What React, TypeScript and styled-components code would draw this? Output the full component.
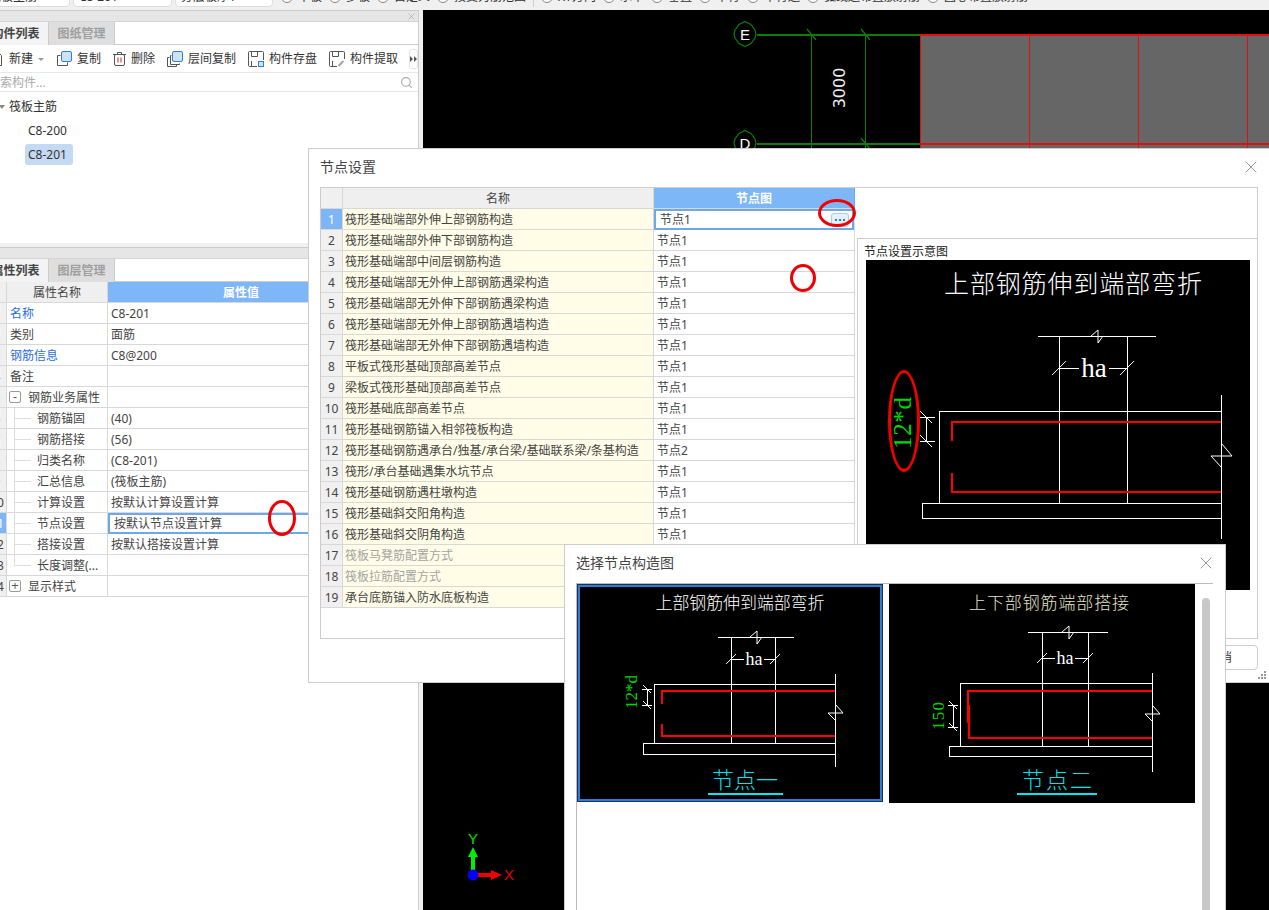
import styled, { createGlobalStyle } from "styled-components";
import { Search, X } from "lucide-react";

const GlobalStyle = createGlobalStyle`
  html, body {
    margin: 0;
    height: 910px;
    overflow: hidden;
    background: #f0f0f0;
    color: #333;
    font: 12px/20px "Noto Sans", "Noto Sans CJK SC", sans-serif;
  }
  * { box-sizing: border-box; }
`;

/* ---------- data ---------- */

const RADIOS = ["中板", "多板", "自定义", "按受力筋范围", "|", "XY方向", "水平", "垂直", "平行", "平行边", "弧线边布置放射筋", "圆心布置放射筋"];

const PROPS = [
  { no: 1, name: "名称", value: "C8-201", link: true },
  { no: 2, name: "类别", value: "面筋" },
  { no: 3, name: "钢筋信息", value: "C8@200", link: true },
  { no: 4, name: "备注", value: "" },
  { no: 5, name: "钢筋业务属性", value: "", group: "-" },
  { no: 6, name: "钢筋锚固", value: "(40)", child: true },
  { no: 7, name: "钢筋搭接", value: "(56)", child: true },
  { no: 8, name: "归类名称", value: "(C8-201)", child: true },
  { no: 9, name: "汇总信息", value: "(筏板主筋)", child: true },
  { no: 10, name: "计算设置", value: "按默认计算设置计算", child: true },
  { no: 11, name: "节点设置", value: "按默认节点设置计算", child: true, active: true },
  { no: 12, name: "搭接设置", value: "按默认搭接设置计算", child: true },
  { no: 13, name: "长度调整(...", value: "", child: true, last: true },
  { no: 14, name: "显示样式", value: "", group: "+" },
];

const NODES = [
  { name: "筏形基础端部外伸上部钢筋构造", node: "节点1" },
  { name: "筏形基础端部外伸下部钢筋构造", node: "节点1" },
  { name: "筏形基础端部中间层钢筋构造", node: "节点1" },
  { name: "筏形基础端部无外伸上部钢筋遇梁构造", node: "节点1" },
  { name: "筏形基础端部无外伸下部钢筋遇梁构造", node: "节点1" },
  { name: "筏形基础端部无外伸上部钢筋遇墙构造", node: "节点1" },
  { name: "筏形基础端部无外伸下部钢筋遇墙构造", node: "节点1" },
  { name: "平板式筏形基础顶部高差节点", node: "节点1" },
  { name: "梁板式筏形基础顶部高差节点", node: "节点1" },
  { name: "筏形基础底部高差节点", node: "节点1" },
  { name: "筏形基础钢筋锚入相邻筏板构造", node: "节点1" },
  { name: "筏形基础钢筋遇承台/独基/承台梁/基础联系梁/条基构造", node: "节点2" },
  { name: "筏形/承台基础遇集水坑节点", node: "节点1" },
  { name: "筏形基础钢筋遇柱墩构造", node: "节点1" },
  { name: "筏形基础斜交阳角构造", node: "节点1" },
  { name: "筏形基础斜交阴角构造", node: "节点1" },
  { name: "筏板马凳筋配置方式", node: "", muted: true },
  { name: "筏板拉筋配置方式", node: "", muted: true },
  { name: "承台底筋锚入防水底板构造", node: "" },
];

type DiagramSpec = {
  view: [number, number, number, number];
  title: { text: string; x: number; y: number; size: number; width: number; color: string };
  dim: { x1: number; x2: number; y: number };
  cols: [number, number];
  ha: { x: number; y: number; size: number };
  slab: { left: number; top: number; bottom: number };
  right: { x: number; y1: number; y2: number };
  base: { left: number; bottom: number };
  rebar: { top: number; bottom: number; upper: [number, number]; lower: [number, number]; stubTop: number; stubBottom: number };
  side: { x1: number; x2: number; xm: number; y1: number; y2: number };
  sideLabel: { text: string; x: number; y: number; size: number; width: number };
  breakAt: { x: number; y: number; h: number; w: number };
  caption?: { text: string; x: number; y: number; size: number; width: number; x1: number; x2: number; lineY: number };
};

const PREVIEW: DiagramSpec = {
  view: [866, 260, 384, 330],
  title: { text: "上部钢筋伸到端部弯折", x: 1073, y: 293, size: 25, width: 258, color: "#fff" },
  dim: { x1: 1038, x2: 1156, y: 336 },
  cols: [1059, 1127],
  ha: { x: 1094, y: 377, size: 27 },
  slab: { left: 939, top: 411, bottom: 503 },
  right: { x: 1221, y1: 395, y2: 539 },
  base: { left: 922, bottom: 518 },
  rebar: { top: 422, bottom: 492, upper: [952, 952], lower: [952, 952], stubTop: 441, stubBottom: 473 },
  side: { x1: 920, x2: 935, xm: 926, y1: 417, y2: 441 },
  sideLabel: { text: "12*d", x: 911, y: 423, size: 25, width: 52 },
  breakAt: { x: 1221, y: 456, h: 12, w: 10 },
};

const NODE_ONE: DiagramSpec = {
  view: [577, 584, 306, 218],
  title: { text: "上部钢筋伸到端部弯折", x: 740, y: 609, size: 17, width: 169, color: "#fff" },
  dim: { x1: 718, x2: 794, y: 637 },
  cols: [731, 775],
  ha: { x: 754, y: 665, size: 18 },
  slab: { left: 654, top: 684, bottom: 743 },
  right: { x: 835, y1: 674, y2: 767 },
  base: { left: 643, bottom: 754 },
  rebar: { top: 691, bottom: 736, upper: [662, 662], lower: [662, 662], stubTop: 704, stubBottom: 724 },
  side: { x1: 642, x2: 652, xm: 647, y1: 689, y2: 705 },
  sideLabel: { text: "12*d", x: 637, y: 692, size: 17, width: 34 },
  breakAt: { x: 835, y: 713, h: 8, w: 7 },
  caption: { text: "节点一", x: 745, y: 788, size: 22, width: 66, x1: 708, x2: 783, lineY: 793 },
};

const NODE_TWO: DiagramSpec = {
  view: [889, 584, 306, 219],
  title: { text: "上下部钢筋端部搭接", x: 1049, y: 609, size: 17, width: 160, color: "#e6e0cc" },
  dim: { x1: 1028, x2: 1108, y: 632 },
  cols: [1042, 1088],
  ha: { x: 1065, y: 664, size: 18 },
  slab: { left: 960, top: 683, bottom: 746 },
  right: { x: 1152, y1: 673, y2: 772 },
  base: { left: 949, bottom: 756 },
  rebar: { top: 691, bottom: 738, upper: [968, 723], lower: [969, 705], stubTop: 723, stubBottom: 705 },
  side: { x1: 948, x2: 958, xm: 953, y1: 705, y2: 727 },
  sideLabel: { text: "150", x: 944, y: 716, size: 17, width: 28 },
  breakAt: { x: 1152, y: 714, h: 8, w: 7 },
  caption: { text: "节点二", x: 1057, y: 788, size: 22, width: 70, x1: 1017, x2: 1097, lineY: 793 },
};

/* ---------- drawings ---------- */

function Tick({ x, y, r }: { x: number; y: number; r: number }) {
  return <line x1={x - r} y1={y + r} x2={x + r} y2={y - r} />;
}

function NodeDiagram({ spec }: { spec: DiagramSpec }) {
  const { view, title, dim, cols, ha, slab, right, base, rebar, side, sideLabel, breakAt, caption } = spec;
  const tickR = view[2] > 320 ? 6 : 4;
  const haGap = ha.size * 0.55;
  return (
    <svg width={view[2]} height={view[3]} viewBox={view.join(" ")} style={{ display: "block" }}>
      <rect x={view[0]} y={view[1]} width={view[2]} height={view[3]} fill="#000" />
      <DiagramTitle x={title.x} y={title.y} fontSize={title.size} fill={title.color} textLength={title.width}>
        {title.text}
      </DiagramTitle>
      <g stroke="#fff" strokeWidth="1" fill="none">
        <g shapeRendering="crispEdges">
          <line x1={dim.x1} y1={dim.y + 0.5} x2={dim.x2} y2={dim.y + 0.5} />
          <line x1={cols[0] + 0.5} y1={dim.y} x2={cols[0] + 0.5} y2={slab.bottom} />
          <line x1={cols[1] + 0.5} y1={dim.y} x2={cols[1] + 0.5} y2={slab.bottom} />
          <line x1={cols[0]} y1={ha.y - ha.size * 0.33} x2={ha.x - haGap} y2={ha.y - ha.size * 0.33} />
          <line x1={ha.x + haGap} y1={ha.y - ha.size * 0.33} x2={cols[1]} y2={ha.y - ha.size * 0.33} />
          <path d={`M${slab.left + 0.5} ${slab.bottom}V${slab.top + 0.5}H${right.x}`} />
          <line x1={right.x + 0.5} y1={right.y1} x2={right.x + 0.5} y2={right.y2} />
          <rect x={base.left + 0.5} y={slab.bottom + 0.5} width={right.x - base.left} height={base.bottom - slab.bottom} />
          <line x1={side.x1} y1={side.y1 + 0.5} x2={side.x2} y2={side.y1 + 0.5} />
          <line x1={side.x1} y1={side.y2 + 0.5} x2={side.x2} y2={side.y2 + 0.5} />
          <line x1={side.xm + 0.5} y1={side.y1} x2={side.xm + 0.5} y2={side.y2} />
        </g>
        <Tick x={cols[0]} y={ha.y - ha.size * 0.33} r={tickR + 1} />
        <Tick x={cols[1]} y={ha.y - ha.size * 0.33} r={tickR + 1} />
        <path d={`M${side.xm - tickR} ${side.y1 - tickR}L${side.xm + tickR} ${side.y1 + tickR}M${side.xm - tickR} ${side.y2 - tickR}L${side.xm + tickR} ${side.y2 + tickR}`} />
        <path d={`M${(dim.x1 + dim.x2) / 2 - 6} ${dim.y}L${(dim.x1 + dim.x2) / 2 + 1} ${dim.y - 6}V${dim.y + 7}L${(dim.x1 + dim.x2) / 2 + 6} ${dim.y}`} />
        <path d={`M${breakAt.x + 1} ${breakAt.y - breakAt.h}L${breakAt.x + breakAt.w + 1} ${breakAt.y}H${breakAt.x - breakAt.w}L${breakAt.x + 1} ${breakAt.y + breakAt.h}`} />
      </g>
      <g stroke="#f00" strokeWidth="2" fill="none" shapeRendering="crispEdges">
        <path d={`M${rebar.upper[0]} ${rebar.stubTop}V${rebar.top}H${right.x}`} />
        <path d={`M${rebar.lower[0]} ${rebar.stubBottom}V${rebar.bottom}H${right.x}`} />
      </g>
      <DimText x={ha.x} y={ha.y} fontSize={ha.size} fill="#fff" textAnchor="middle">ha</DimText>
      <DimText
        transform={`rotate(-90 ${sideLabel.x} ${sideLabel.y})`}
        x={sideLabel.x}
        y={sideLabel.y}
        fontSize={sideLabel.size}
        fill="#00d800"
        textAnchor="middle"
        textLength={sideLabel.width}
      >
        {sideLabel.text}
      </DimText>
      {caption ? (
        <>
          <DiagramTitle x={caption.x} y={caption.y} fontSize={caption.size} fill="#00e4f0" textLength={caption.width}>
            {caption.text}
          </DiagramTitle>
          <rect x={caption.x1} y={caption.lineY} width={caption.x2 - caption.x1} height="2" fill="#00e8f0" />
        </>
      ) : null}
    </svg>
  );
}

function GridMark({ y, label }: { y: number; label: string }) {
  return (
    <>
      <path
        d={`M745 ${y - 12.5}l6 3 4 5.5 1 4-1 4-4 5.5-6 3-6-3-4-5.5-1-4 1-4 4-5.5z`}
        fill="#000"
        stroke="#0a7d0a"
        strokeWidth="1.2"
      />
      <MarkText x={745} y={y + 5.5} textAnchor="middle">{label}</MarkText>
    </>
  );
}

function CadDrawing() {
  return (
    <svg width="846" height="900" viewBox="423 10 846 900" style={{ display: "block" }}>
      <rect x="920" y="34" width="349" height="170" fill="#666" />
      <g stroke="#0a7d0a" shapeRendering="crispEdges" fill="none">
        <path d="M757 34.5H920M757 143.5H920" strokeWidth="2" />
        <path d="M811.5 34V160M865.5 34V160" strokeWidth="1" />
      </g>
      <path d="M807 29l9 11M861 29l9 11M861 138l9 11" stroke="#0a7d0a" strokeWidth="1.2" />
      <g stroke="#e01010" strokeWidth="1" shapeRendering="crispEdges" fill="none">
        <path d="M920 34.5H1269M920 143.5H1269" strokeWidth="2" />
        <path d="M920.5 34V204M1029.5 34V204M1138.5 34V204M1247.5 34V204" />
      </g>
      <GridMark y={34} label="E" />
      <GridMark y={143} label="D" />
      <DimensionText transform="rotate(-90 845 88)" x={845} y={88} textAnchor="middle">3000</DimensionText>
      <path d="M471 875V857H468L473 847 478 857H475V875z" fill="#00f000" />
      <path d="M473 873H491V870L502 875 491 880V877H473z" fill="#f00000" />
      <circle cx="473" cy="875" r="5.5" fill="#0000f0" />
      <AxisText x={473} y={844} fill="#00e000" textAnchor="middle">Y</AxisText>
      <AxisText x={509} y={880} fill="#e00000" textAnchor="middle">X</AxisText>
    </svg>
  );
}

const ICON = { line: "#555", blue: "#2f7fe0", fill: "#cfe2fb" };

function NewIcon() {
  return (
    <svg width="15" height="16" viewBox="0 0 15 16" fill="none" stroke={ICON.line}>
      <path d="M2.5 1.5h7l3 3v10h-10z" />
    </svg>
  );
}

function CopyIcon() {
  return (
    <svg width="16" height="16" viewBox="0 0 16 16" fill="none">
      <path d="M4.5 4.5h-3v10h10v-3" stroke={ICON.line} strokeLinejoin="round" />
      <rect x="5.5" y="0.5" width="10" height="10" rx="1.5" fill={ICON.fill} stroke={ICON.blue} />
    </svg>
  );
}

function TrashIcon() {
  return (
    <svg width="13" height="16" viewBox="0 0 13 16" fill="none" stroke={ICON.line}>
      <path d="M0 3.5h13M4.5 3V1.5h4V3" />
      <rect x="1.5" y="3.5" width="10" height="11" rx="1.5" />
      <path d="M5 6.5v5M8 6.5v5" stroke="#d92020" />
    </svg>
  );
}

function LayerCopyIcon() {
  return (
    <svg width="16" height="16" viewBox="0 0 16 16" fill="none">
      <path d="M2.5 6.5h-2v9h9v-2" stroke={ICON.line} />
      <path d="M4.5 4.5h-1v9h9v-1" stroke={ICON.line} />
      <rect x="5.5" y="0.5" width="10" height="10" rx="1.5" fill={ICON.fill} stroke={ICON.blue} />
    </svg>
  );
}

function SaveIcon() {
  return (
    <svg width="16" height="16" viewBox="0 0 16 16" fill="none">
      <path d="M9 15.5H1.5a1 1 0 0 1-1-1v-13a1 1 0 0 1 1-1h13a1 1 0 0 1 1 1V9" stroke={ICON.line} />
      <path d="M3.5 1v4.5h6V1M3.5 15v-5" stroke={ICON.line} />
      <rect x="10.5" y="10.5" width="5" height="5" fill={ICON.fill} stroke={ICON.blue} />
    </svg>
  );
}

function ExtractIcon() {
  return (
    <svg width="16" height="16" viewBox="0 0 16 16" fill="none">
      <path d="M8 15.5H1.5a1 1 0 0 1-1-1v-13a1 1 0 0 1 1-1h13a1 1 0 0 1 1 1V8" stroke={ICON.line} />
      <path d="M3.5 1v4.5h6V1M3.5 15v-5" stroke={ICON.line} />
      <path d="M9.5 15l5-5" stroke="#9aa4b0" strokeWidth="2" />
    </svg>
  );
}

/* ---------- app ---------- */

export default function App() {
  return (
    <Viewport>
      <GlobalStyle />
      <Workspace>
        <TopBar>
          <TopRow>
            <Field $width={87}>筏板主筋</Field>
            <Field $width={99}>C8-201</Field>
            <Field $width={98}>分层板厚1</Field>
            <RadioRow>
              {RADIOS.map((label) =>
                label === "|" ? (
                  <RadioDivider key={label} />
                ) : (
                  <RadioItem key={label}>
                    <RadioDot />
                    {label}
                  </RadioItem>
                ),
              )}
            </RadioRow>
          </TopRow>
        </TopBar>

        <MainRow>
          <LeftColumn>
            <Panel $height={233}>
              <PanelStrip>
                <X size={11} strokeWidth={1.2} color="#999" />
              </PanelStrip>
              <Tabs>
                <Tab $active>构件列表</Tab>
                <Tab>图纸管理</Tab>
              </Tabs>
              <Toolbar>
                <ToolButton><NewIcon />新建<Caret /></ToolButton>
                <ToolButton><CopyIcon />复制</ToolButton>
                <ToolButton><TrashIcon />删除</ToolButton>
                <ToolButton><LayerCopyIcon />层间复制</ToolButton>
                <ToolButton><SaveIcon />构件存盘</ToolButton>
                <ToolButton><ExtractIcon />构件提取</ToolButton>
                <MoreButton>
                  <svg width="7" height="6" viewBox="0 0 7 6" fill="#555"><path d="M0 0l3 3-3 3zM4 0l3 3-3 3z" /></svg>
                </MoreButton>
              </Toolbar>
              <SearchBar>
                搜索构件...
                <Search size={13} color="#aaa" />
              </SearchBar>
              <TreeList>
                <TreeRoot><TreeCaret />筏板主筋</TreeRoot>
                <TreeItem>C8-200</TreeItem>
                <TreeItem $selected>C8-201</TreeItem>
              </TreeList>
            </Panel>
            <Panel>
              <PanelStrip />
              <Tabs>
                <Tab $active>属性列表</Tab>
                <Tab>图层管理</Tab>
              </Tabs>
              <GridRow>
                <RowNo $width={24} />
                <HeadCell $width={101}>属性名称</HeadCell>
                <HeadCell $width={267} $accent>属性值</HeadCell>
              </GridRow>
              {PROPS.map((p) => (
                <GridRow key={p.no}>
                  <RowNo $width={24} $active={p.active} $shift>{p.no}</RowNo>
                  <NameCell $child={p.child} $last={p.last} $link={p.link}>
                    {p.group ? <Expander>{p.group}</Expander> : null}
                    {p.name}
                  </NameCell>
                  <ValueCell $active={p.active}>{p.value}</ValueCell>
                </GridRow>
              ))}
            </Panel>
          </LeftColumn>
          <Canvas>
            <CadDrawing />
          </Canvas>
        </MainRow>
      </Workspace>

      <SettingsDialog>
        <DialogHeader>
          节点设置
          <CloseIcon size={20} strokeWidth={0.9} color="#777" />
        </DialogHeader>
        <SettingsBox>
          <NodeTable>
            <GridRow>
              <RowNo $width={22} />
              <HeadCell $width={311}>名称</HeadCell>
              <HeadCell $width={201} $accent>节点图</HeadCell>
            </GridRow>
            {NODES.map((n, i) => (
              <GridRow key={n.name}>
                <RowNo $width={22} $active={i === 0}>{i + 1}</RowNo>
                <NodeName $muted={n.muted}>{n.name}</NodeName>
                <NodeValue $active={i === 0}>
                  {n.node}
                  {i === 0 ? (
                    <DotsButton>
                      <svg width="10" height="2" viewBox="0 0 10 2" fill="#2f7fe0"><path d="M0 0h2v2H0zM4 0h2v2H4zM8 0h2v2H8z" /></svg>
                    </DotsButton>
                  ) : null}
                </NodeValue>
              </GridRow>
            ))}
          </NodeTable>
          <PreviewGroup>
            <PreviewLabel>节点设置示意图</PreviewLabel>
            <NodeDiagram spec={PREVIEW} />
          </PreviewGroup>
        </SettingsBox>
        <DialogFooter>
          <CancelButton>取消</CancelButton>
        </DialogFooter>
        <ResizeGrip width="9" height="9" viewBox="0 0 9 9" fill="#999">
          <path d="M6 0h2v2H6zM3 3h2v2H3zM6 3h2v2H6zM0 6h2v2H0zM3 6h2v2H3zM6 6h2v2H6z" />
        </ResizeGrip>
      </SettingsDialog>

      <Marker $x={837} $y={213} $rx={19} $ry={14} />
      <Marker $x={803} $y={278} $rx={13} $ry={14} />
      <Marker $x={282} $y={518} $rx={14} $ry={18} />
      <Marker $x={904} $y={421} $rx={16} $ry={51} />

      <PickerDialog>
        <DialogHeader>
          选择节点构造图
          <CloseIcon size={20} strokeWidth={0.9} color="#777" />
        </DialogHeader>
        <Gallery>
          <NodeCard $selected>
            <NodeDiagram spec={NODE_ONE} />
          </NodeCard>
          <NodeCard>
            <NodeDiagram spec={NODE_TWO} />
          </NodeCard>
          <ScrollThumb />
        </Gallery>
      </PickerDialog>
    </Viewport>
  );
}

/* ---------- styles ---------- */

const Viewport = styled.div`
  position: relative;
  width: 1269px;
  height: 910px;
  overflow: hidden;
`;

const Workspace = styled.div`
  width: 1286px;
  height: 910px;
  margin-left: -17px;
  display: flex;
  flex-direction: column;
`;

const TopBar = styled.div`
  height: 10px;
  flex: none;
  overflow: hidden;
`;

const TopRow = styled.div`
  display: flex;
  gap: 3px;
  height: 21px;
  margin-top: -14px;
`;

const Field = styled.div<{ $width: number }>`
  width: ${(p) => p.$width}px;
  height: 21px;
  padding-left: 5px;
  background: #fff;
  border: 1px solid #ddd;
  border-radius: 4px;
`;

const RadioRow = styled.div`
  display: flex;
  align-items: center;
  gap: 7px;
  margin-left: 5px;
`;

const RadioItem = styled.span`
  display: flex;
  align-items: center;
  gap: 5px;
  white-space: nowrap;
`;

const RadioDot = styled.i`
  width: 12px;
  height: 12px;
  background: #fff;
  border: 1px solid #888;
  border-radius: 50%;
`;

const RadioDivider = styled.i`
  width: 1px;
  height: 21px;
  background: #ccc;
`;

const MainRow = styled.div`
  flex: 1;
  display: flex;
  min-height: 0;
`;

const LeftColumn = styled.div`
  width: 436px;
  flex: none;
  display: flex;
  flex-direction: column;
  gap: 4px;
`;

const Panel = styled.section<{ $height?: number }>`
  ${(p) => (p.$height ? `height: ${p.$height}px;` : "flex: 1;")}
  background: #fff;
  border-top: 1px solid #ccc;
  border-right: 1px solid #ccc;
`;

const PanelStrip = styled.div`
  height: 11px;
  display: flex;
  align-items: center;
  justify-content: flex-end;
  padding-right: 1px;
  background: #e6e6e6;
  border-bottom: 1px solid #d4d4d4;
`;

const Tabs = styled.div`
  height: 23px;
  display: flex;
  border-bottom: 1px solid #ccc;
`;

const Tab = styled.div<{ $active?: boolean }>`
  width: 66px;
  height: 23px;
  text-align: center;
  line-height: 24px;
  font-weight: 700;
  color: ${(p) => (p.$active ? "#444" : "#a0a0a0")};
  background: ${(p) => (p.$active ? "#f3f3f3" : "#dedede")};
  border-right: 1px solid #ccc;
`;

const Toolbar = styled.div`
  height: 28px;
  display: flex;
  align-items: center;
  gap: 12px;
  padding: 1px 0 0 6px;
  border-bottom: 1px solid #e8e8e8;
`;

const ToolButton = styled.div`
  display: flex;
  align-items: center;
  gap: 5px;
  white-space: nowrap;
`;

const Caret = styled.i`
  width: 0;
  height: 0;
  border: 3px solid transparent;
  border-top: 3px solid #999;
  border-bottom: 0;
`;

const MoreButton = styled.div`
  width: 10px;
  height: 20px;
  display: flex;
  align-items: center;
  justify-content: center;
  margin-left: -1px;
  border: 1px solid #e4e4e4;
  border-radius: 3px;
`;

const SearchBar = styled.div`
  height: 19px;
  display: flex;
  align-items: center;
  justify-content: space-between;
  padding: 1px 5px 0 5px;
  color: #aaa;
  border-bottom: 1px solid #e4e4e4;
`;

const TreeList = styled.div`
  padding-top: 4px;
`;

const TreeRoot = styled.div`
  height: 21px;
  display: flex;
  align-items: center;
  padding-left: 16px;
  gap: 4px;
`;

const TreeCaret = styled.i`
  border: 3px solid transparent;
  border-top: 4px solid #888;
  border-bottom: 0;
`;

const TreeItem = styled.div<{ $selected?: boolean }>`
  width: 48px;
  height: 21px;
  margin: 3px 0 0 42px;
  padding-left: 3px;
  line-height: 21px;
  border-radius: 3px;
  background: ${(p) => (p.$selected ? "#c4d9f2" : "transparent")};
`;

const GridRow = styled.div`
  display: flex;
  height: 21px;
  line-height: 22px;
`;

const RowNo = styled.div<{ $width: number; $active?: boolean; $shift?: boolean }>`
  width: ${(p) => p.$width}px;
  flex: none;
  padding-left: ${(p) => (p.$shift ? 5 : 0)}px;
  text-align: center;
  background: ${(p) => (p.$active ? "#7db6f6" : "#f0f0f0")};
  color: ${(p) => (p.$active ? "#fff" : "#444")};
  border-right: 1px solid #d8d8d8;
  border-bottom: 1px solid #d8d8d8;
`;

const HeadCell = styled.div<{ $width: number; $accent?: boolean }>`
  width: ${(p) => p.$width}px;
  flex: none;
  text-align: center;
  font-weight: ${(p) => (p.$accent ? 700 : 400)};
  color: ${(p) => (p.$accent ? "#fff" : "#444")};
  background: ${(p) => (p.$accent ? "#7eb7f8" : "#efefef")};
  border-right: 1px solid ${(p) => (p.$accent ? "#6aa6ea" : "#d8d8d8")};
  border-bottom: 1px solid #d8d8d8;
`;

const NameCell = styled.div<{ $child?: boolean; $last?: boolean; $link?: boolean }>`
  position: relative;
  width: 101px;
  flex: none;
  display: flex;
  align-items: center;
  gap: 7px;
  padding: 2px 0 0 ${(p) => (p.$child ? 30 : 3)}px;
  white-space: nowrap;
  color: ${(p) => (p.$link ? "#2b6ce0" : "#444")};
  border-right: 1px solid #d8d8d8;
  border-bottom: 1px solid #d8d8d8;
  ${(p) =>
    p.$child
      ? `
    &::before { content: ""; position: absolute; left: 7px; top: 10px; width: 17px; height: 1px; background: #ddd; }
    &::after { content: ""; position: absolute; left: 7px; top: 0; width: 1px; height: ${p.$last ? "10px" : "21px"}; background: #ddd; }
  `
      : ""}
`;

const ValueCell = styled.div<{ $active?: boolean }>`
  width: 267px;
  flex: none;
  padding-left: ${(p) => (p.$active ? 4 : 3)}px;
  ${(p) => (p.$active ? "line-height: 17px;" : "")}
  color: #444;
  border-bottom: 1px solid #d8d8d8;
  ${(p) => (p.$active ? "border: 2px solid #6ea8ea; border-right: 0;" : "")}
`;

const Expander = styled.i`
  width: 12px;
  height: 12px;
  margin: -2px 0 0 -1px;
  display: flex;
  align-items: center;
  justify-content: center;
  font: 12px/10px "Liberation Sans", sans-serif;
  color: #555;
  border: 1px solid #999;
  border-radius: 2px;
`;

const Canvas = styled.main`
  flex: 1;
  margin-left: 4px;
  background: #000;
  overflow: hidden;
`;

const MarkText = styled.text`
  font: 15px "Liberation Sans", sans-serif;
  fill: #fff;
`;

const DimensionText = styled.text`
  font: 16px "DejaVu Sans", sans-serif;
  fill: #eee;
`;

const AxisText = styled.text`
  font: 15px "Liberation Sans", sans-serif;
`;

const DiagramTitle = styled.text`
  font-family: "Noto Sans CJK SC", serif;
  font-weight: 300;
  text-anchor: middle;
`;

const DimText = styled.text`
  font-family: "Liberation Serif", serif;
`;

const SettingsDialog = styled.div`
  position: absolute;
  left: 308px;
  top: 148px;
  width: 961px;
  height: 535px;
  display: flex;
  flex-direction: column;
  padding: 0 11px;
  background: #fff;
  border: 1px solid #ccc;
  border-right: 0;
`;

const DialogHeader = styled.header`
  height: 38px;
  flex: none;
  display: flex;
  align-items: center;
  justify-content: space-between;
  padding-bottom: 3px;
  font-size: 14px;
  color: #444;
`;

const CloseIcon = styled(X)`
  margin-right: -3px;
`;

const SettingsBox = styled.div`
  height: 452px;
  display: flex;
  border: 1px solid #ccc;
`;

const NodeTable = styled.div`
  width: 534px;
  flex: none;
  border-right: 1px solid #d8d8d8;
`;

const NodeName = styled.div<{ $muted?: boolean }>`
  width: 311px;
  flex: none;
  padding-left: 2px;
  white-space: nowrap;
  background: #fffde8;
  color: ${(p) => (p.$muted ? "#a4a4a4" : "#444")};
  border-right: 1px solid #d8d8d8;
  border-bottom: 1px solid #d8d8d8;
`;

const NodeValue = styled.div<{ $active?: boolean }>`
  flex: 1;
  display: flex;
  align-items: center;
  justify-content: space-between;
  padding: ${(p) => (p.$active ? "0 3px 0 4px" : "2px 3px 0 3px")};
  color: #444;
  border-bottom: 1px solid #d8d8d8;
  ${(p) => (p.$active ? "border: 2px solid #6ea8ea;" : "")}
`;

const DotsButton = styled.span`
  width: 18px;
  height: 14px;
  display: flex;
  align-items: center;
  justify-content: center;
  background: #e6f0fc;
  border: 1px solid #a9c9f0;
  border-radius: 3px;
`;

const PreviewGroup = styled.div`
  flex: 1;
  margin: 50px 0 0 2px;
  padding: 0 7px 0 8px;
  border-top: 1px solid #ccc;
  border-left: 1px solid #ccc;
`;

const PreviewLabel = styled.div`
  height: 21px;
  margin-left: -2px;
  padding-top: 3px;
  color: #222;
`;

const DialogFooter = styled.footer`
  display: flex;
  justify-content: flex-end;
  padding-top: 6px;
`;

const CancelButton = styled.div`
  width: 76px;
  height: 25px;
  text-align: center;
  line-height: 23px;
  border: 1px solid #ccc;
  border-radius: 4px;
`;

const ResizeGrip = styled.svg`
  position: absolute;
  right: 2px;
  bottom: 2px;
`;

const Marker = styled.div<{ $x: number; $y: number; $rx: number; $ry: number }>`
  position: absolute;
  left: ${(p) => p.$x - p.$rx}px;
  top: ${(p) => p.$y - p.$ry}px;
  width: ${(p) => p.$rx * 2}px;
  height: ${(p) => p.$ry * 2}px;
  border: 3px solid #f00000;
  border-radius: 50%;
`;

const PickerDialog = styled.div`
  position: absolute;
  left: 564px;
  top: 544px;
  width: 662px;
  height: 366px;
  display: flex;
  flex-direction: column;
  padding: 0 12px 0 11px;
  background: #fff;
  border: 1px solid #ccc;
  border-bottom: 0;
`;

const Gallery = styled.div`
  flex: 1;
  display: flex;
  gap: 6px;
  align-items: flex-start;
  border-top: 1px solid #bbb;
  border-left: 1px solid #bbb;
`;

const NodeCard = styled.div<{ $selected?: boolean }>`
  position: relative;
  flex: none;
  width: 306px;
  background: #000;
  &::after {
    content: "";
    position: absolute;
    inset: 0;
    ${(p) => (p.$selected ? "box-shadow: inset 0 0 0 1px #1c3050, inset 0 0 0 3px #2f7bd6;" : "")}
  }
`;

const ScrollThumb = styled.div`
  width: 8px;
  height: 400px;
  margin: 14px 0 0 1px;
  background: #c8c8c8;
  border-radius: 4px;
`;
